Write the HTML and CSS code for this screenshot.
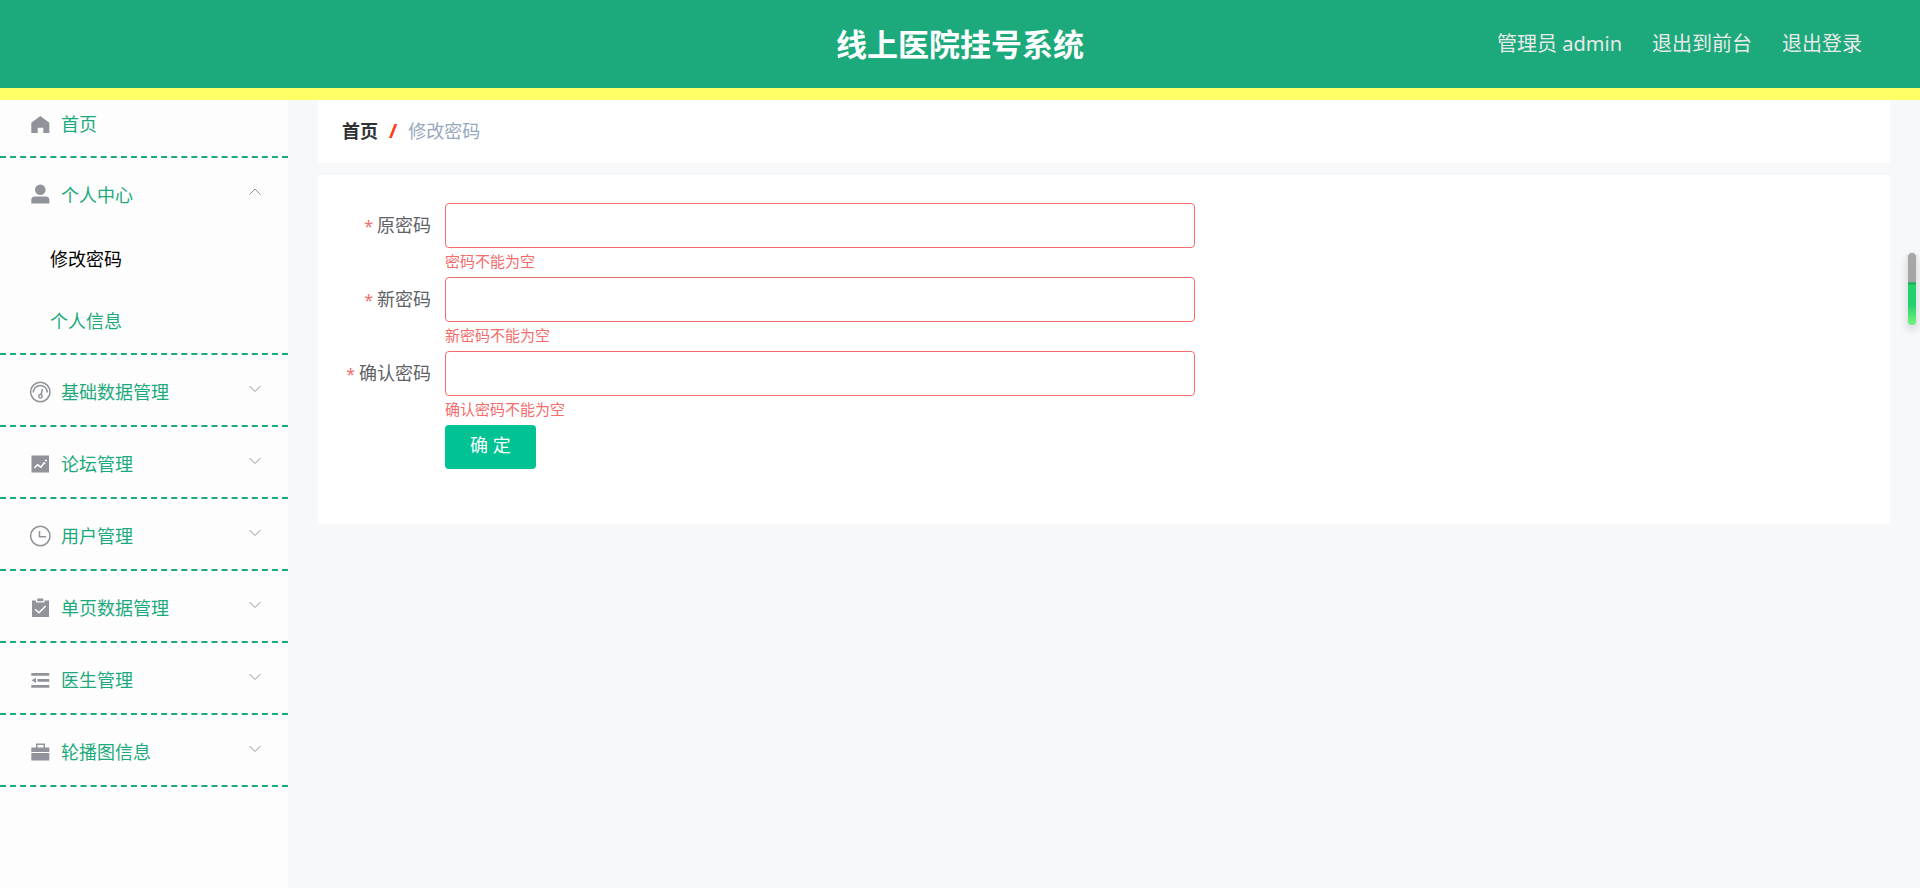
FILE: index.html
```html
<!DOCTYPE html>
<html lang="zh-CN">
<head>
    <meta charset="UTF-8">
    <meta name="viewport" content="width=device-width, initial-scale=1.0">
    <title>线上医院挂号系统</title>
    <link rel="stylesheet" href="styles.css">
</head>
<body>
    <header class="header">
        <h1 class="title">线上医院挂号系统</h1>
        <nav class="user-nav">
            <span>管理员 admin</span>
            <a href="#">退出到前台</a>
            <a href="#">退出登录</a>
        </nav>
    </header>

    <div class="layout">
        <nav class="sidebar">
            <div class="menu-group">
                <a href="#" class="menu-item menu-home">
                    <svg class="icon" viewBox="0 0 24 24"><path d="M12.3 4 21.3 10.7V21H15.3V15.7H9.7V21H3.3V10.7z"/></svg>
                    <span>首页</span>
                </a>
            </div>
            <div class="menu-group menu-open">
                <button type="button" class="menu-item" aria-expanded="true">
                    <svg class="icon" viewBox="0 0 24 24"><circle cx="12.3" cy="6.8" r="5.3"/><path d="M3.3 20.5V17a3.5 3.5 0 0 1 3.5-3.5h11a3.5 3.5 0 0 1 3.5 3.5v3.5z"/></svg>
                    <span>个人中心</span>
                    <svg class="arrow" viewBox="0 0 12 8"><path d="M.5 6.5 6 1l5.5 5.5"/></svg>
                </button>
                <a href="#" class="sub-item active">修改密码</a>
                <a href="#" class="sub-item">个人信息</a>
            </div>
            <div class="menu-group">
                <button type="button" class="menu-item">
                    <svg class="icon line" viewBox="0 0 24 24"><circle cx="12.3" cy="12" r="9.7"/><path d="M5.3 12.5a7 7 0 0 1 14 0M14.5 9l-1.5 5.5"/><circle cx="12.5" cy="16.2" r="1.7"/></svg>
                    <span>基础数据管理</span>
                    <svg class="arrow" viewBox="0 0 12 8"><path d="M.5 1 6 6.5 11.5 1"/></svg>
                </button>
            </div>
            <div class="menu-group">
                <button type="button" class="menu-item">
                    <svg class="icon" viewBox="0 0 24 24"><path d="M3.5 3.5H21v17H3.5z"/><path class="mark" d="m6.3 16 3.2-3.2 3.5 2.4 3-4.2 1.3.5M17 8.5h2"/></svg>
                    <span>论坛管理</span>
                    <svg class="arrow" viewBox="0 0 12 8"><path d="M.5 1 6 6.5 11.5 1"/></svg>
                </button>
            </div>
            <div class="menu-group">
                <button type="button" class="menu-item">
                    <svg class="icon line" viewBox="0 0 24 24"><circle cx="12.3" cy="12" r="9.7"/><path d="M11.5 7v5.7H18"/></svg>
                    <span>用户管理</span>
                    <svg class="arrow" viewBox="0 0 12 8"><path d="M.5 1 6 6.5 11.5 1"/></svg>
                </button>
            </div>
            <div class="menu-group">
                <button type="button" class="menu-item">
                    <svg class="icon" viewBox="0 0 24 24"><path d="M4 4.500h4v2h8.500v-2H21V21H4zM9.300 2.500h6v2.700h-6z"/><path class="mark" d="m7 13.300 4 3.500 6.700-6.800"/></svg>
                    <span>单页数据管理</span>
                    <svg class="arrow" viewBox="0 0 12 8"><path d="M.5 1 6 6.5 11.5 1"/></svg>
                </button>
            </div>
            <div class="menu-group">
                <button type="button" class="menu-item">
                    <svg class="icon" viewBox="0 0 24 24"><path d="M3.3 5h18v2.7h-18zM9.5 11h11.8v2.7H9.5zM3.3 17h18v2.7h-18zM3.5 12.3 8 9.7v5.2z"/></svg>
                    <span>医生管理</span>
                    <svg class="arrow" viewBox="0 0 12 8"><path d="M.5 1 6 6.5 11.5 1"/></svg>
                </button>
            </div>
            <div class="menu-group">
                <button type="button" class="menu-item">
                    <svg class="icon" viewBox="0 0 24 24"><path d="M3.3 12V7.5H8v-4h9v4h4.3V12zM9.5 5v2.5h6V5zM3.3 13h18v7.5h-18z" fill-rule="evenodd"/></svg>
                    <span>轮播图信息</span>
                    <svg class="arrow" viewBox="0 0 12 8"><path d="M.5 1 6 6.5 11.5 1"/></svg>
                </button>
            </div>
        </nav>

        <main class="main">
            <nav class="breadcrumb">
                <a href="#">首页</a>
                <span class="separator">/</span>
                <span>修改密码</span>
            </nav>

            <form class="form-card">
                <div class="form-item">
                    <label for="oldPassword">原密码</label>
                    <div class="field">
                        <input type="password" id="oldPassword">
                        <div class="error">密码不能为空</div>
                    </div>
                </div>
                <div class="form-item">
                    <label for="newPassword">新密码</label>
                    <div class="field">
                        <input type="password" id="newPassword">
                        <div class="error">新密码不能为空</div>
                    </div>
                </div>
                <div class="form-item">
                    <label for="rePassword">确认密码</label>
                    <div class="field">
                        <input type="password" id="rePassword">
                        <div class="error">确认密码不能为空</div>
                    </div>
                </div>
                <button type="button" class="submit">确 定</button>
            </form>
        </main>
    </div>

    <!-- floating meter on the right edge -->
    <div class="meter"><div class="meter-fill"></div></div>
</body>
</html>
```
FILE: styles.css
```css
* {
    box-sizing: border-box;
}

body {
    margin: 0;
    min-height: 100vh;
    display: flex;
    flex-direction: column;
    font-family: "Noto Sans", "Noto Sans CJK SC", sans-serif;
    font-size: 18px;
    line-height: 24px;
    color: #606266;
    background-color: #f6f8fa;
}

a {
    color: inherit;
    text-decoration: none;
}

button, input {
    font-family: inherit;
    font-size: inherit;
    line-height: inherit;
}

.header {
    display: grid;
    grid-template-columns: 1fr auto 1fr;
    align-items: center;
    height: 100px;
    padding: 0 58px;
    background-color: #1ca97c;
    border-bottom: 12px solid #ffff66;
}

.title {
    grid-column: 2;
    margin: 0;
    font-size: 31px;
    line-height: 40px;
    color: #fff;
}

.user-nav {
    display: flex;
    justify-content: flex-end;
    gap: 30px;
    font-size: 20px;
    color: #e9e9e9;
}

.layout {
    flex: 1;
    display: flex;
}

.sidebar {
    width: 288px;
    flex-shrink: 0;
    background-color: #fdfdfd;
    color: #1ca97c;
}

.menu-group {
    border-bottom: 2px dashed #1ca97c;
}

.menu-open {
    padding-bottom: 1px;
}

.menu-item {
    display: flex;
    align-items: center;
    gap: 9px;
    width: 100%;
    height: 70px;
    padding: 4px 27px 0 28px;
    border: none;
    background: none;
    color: inherit;
    text-align: left;
    cursor: pointer;
}

.menu-home {
    height: 56px;
    padding-top: 0;
    padding-bottom: 9px;
}

.icon {
    width: 24px;
    height: 24px;
    fill: #909399;
}

.line {
    fill: none;
    stroke: #909399;
    stroke-width: 1.5;
}

.mark {
    fill: none;
    stroke: #fff;
    stroke-width: 1.5;
}

.arrow {
    width: 12px;
    height: 8px;
    margin-left: auto;
    margin-bottom: 7px;
    fill: none;
    stroke: #909399;
}

.sub-item {
    display: block;
    padding: 19px 50px;
}

.sub-item.active {
    color: #000;
}

.main {
    flex: 1;
    padding: 0 30px;
}

.breadcrumb {
    display: flex;
    align-items: center;
    gap: 11px;
    height: 63px;
    padding: 0 24px 1px;
    margin-bottom: 12px;
    border-radius: 4px;
    background-color: #fff;
    color: #97a8be;
}

.breadcrumb a {
    font-weight: bold;
    color: #303133;
}

.separator {
    font-size: 20px;
    font-weight: bold;
    color: #ff3c14;
}

.form-card {
    padding: 28px 24px 55px;
    background-color: #fff;
}

.form-item {
    display: flex;
    gap: 14px;
    height: 74px;
}

.form-item label {
    width: 89px;
    line-height: 44px;
    text-align: right;
    white-space: nowrap;
}

.form-item label::before {
    content: "*";
    margin-right: 4px;
    font-size: 16px;
    color: #f56c6c;
}

.field {
    width: 750px;
}

.field input {
    display: block;
    width: 100%;
    height: 45px;
    padding: 0 12px;
    border: 1px solid #f56c6c;
    border-radius: 4px;
    outline: none;
    background-color: #fff;
}

.error {
    padding-top: 1px;
    font-size: 15px;
    color: #f56c6c;
}

.submit {
    display: block;
    height: 44px;
    margin-left: 103px;
    padding: 0 25px 4px;
    border: none;
    border-radius: 4px;
    background-color: #00c292;
    color: #fff;
    cursor: pointer;
}

.meter {
    position: fixed;
    top: 252px;
    right: 3px;
    width: 10px;
    height: 74px;
    border: 1px solid #e4e6e8;
    border-radius: 5px;
    background-color: #a6a6a6;
    box-shadow: 0 4px 8px rgba(0, 0, 0, 0.15);
    overflow: hidden;
}

.meter-fill {
    height: 43px;
    margin-top: 29px;
    border-top: 3px solid #22b463;
    background: linear-gradient(#25d16c 50%, #72f57c);
}
```
